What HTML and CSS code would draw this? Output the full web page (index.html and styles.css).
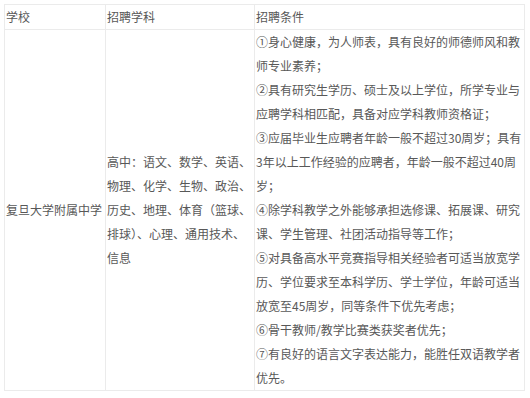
FILE: index.html
```html
<!DOCTYPE html>
<html lang="zh-CN">
<head>
<meta charset="utf-8">
<title>招聘信息</title>
<link rel="stylesheet" href="styles.css">
</head>
<body>
<table class="jobs">
  <colgroup>
    <col class="c-school">
    <col class="c-subject">
    <col class="c-cond">
  </colgroup>
  <thead>
    <tr>
      <th>学校</th>
      <th>招聘学科</th>
      <th>招聘条件</th>
    </tr>
  </thead>
  <tbody>
    <tr>
      <td class="mid">复旦大学附属中学</td>
      <td class="mid">高中：语文、数学、英语、物理、化学、生物、政治、历史、地理、体育（篮球、排球）、心理、通用技术、信息</td>
      <td>
        <p>①身心健康，为人师表，具有良好的师德师风和教师专业素养；</p>
        <p>②具有研究生学历、硕士及以上学位，所学专业与应聘学科相匹配，具备对应学科教师资格证；</p>
        <p>③应届毕业生应聘者年龄一般不超过30周岁；具有3年以上工作经验的应聘者，年龄一般不超过40周岁；</p>
        <p>④除学科教学之外能够承担选修课、拓展课、研究课、学生管理、社团活动指导等工作；</p>
        <p>⑤对具备高水平竞赛指导相关经验者可适当放宽学历、学位要求至本科学历、学士学位，年龄可适当放宽至45周岁，同等条件下优先考虑；</p>
        <p>⑥骨干教师/教学比赛类获奖者优先；</p>
        <p>⑦有良好的语言文字表达能力，能胜任双语教学者优先。</p>
      </td>
    </tr>
  </tbody>
</table>
</body>
</html>
```
FILE: styles.css
```css
html, body {
  margin: 0;
  padding: 0;
  background: #ffffff;
}

body {
  padding: 4px 0 0 4px;
  font-family: "Noto Sans CJK SC", "Noto Sans", sans-serif;
  font-size: 12px;
  line-height: 24px;
  color: #585858;
}

.jobs {
  border-collapse: collapse;
  table-layout: fixed;
  width: 520px;
}

.c-school { width: 101px; }
.c-subject { width: 149px; }
.c-cond { width: 270px; }

.jobs th,
.jobs td {
  border: 1px solid #ebebeb;
  padding: 0 0 0 1px;
  text-align: left;
  vertical-align: top;
  font-weight: normal;
}

.jobs td.mid {
  vertical-align: middle;
}

.jobs p {
  margin: 0;
}
```
